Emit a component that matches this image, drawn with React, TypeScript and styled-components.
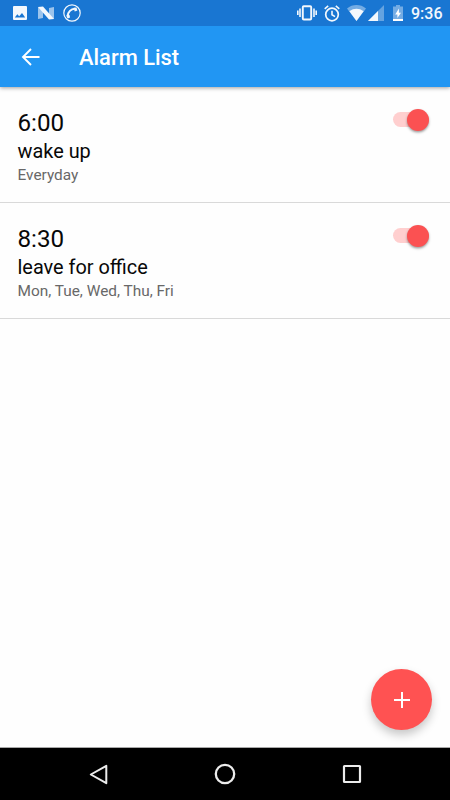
import React from "react";
import styled, { createGlobalStyle } from "styled-components";

const GlobalStyle = createGlobalStyle`
  * { box-sizing: border-box; }
  body { margin: 0; background: #fefefe; font-family: Roboto, "Liberation Sans", sans-serif; }
`;

const Screen = styled.div`
  display: flex;
  flex-direction: column;
  width: 450px;
  height: 800px;
  overflow: hidden;
  background: #fefefe;
`;

const StatusBar = styled.div`
  display: flex;
  align-items: center;
  flex: 0 0 26px;
  padding: 0 8px 0 13px;
  background: #1976d2;
  color: #f3f8fd;
  z-index: 2;
`;

const Glyph = styled.svg<{ $gap?: number }>`
  display: block;
  flex: none;
  margin-right: ${(p) => p.$gap ?? 0}px;
`;

const Spacer = styled.div`
  flex: 1;
`;

const Clock = styled.span`
  width: 31px;
  font-size: 16px;
  line-height: 20px;
  font-weight: 500;
  white-space: nowrap;
  margin-top: 2px;
`;

const AppBar = styled.header`
  display: flex;
  align-items: center;
  flex: 0 0 61px;
  padding: 0 21px;
  gap: 39px;
  background: #2196f3;
  color: #fff;
  box-shadow: 0 1px 4px rgba(0, 0, 0, 0.38);
  z-index: 1;
`;

const IconButton = styled.button`
  display: flex;
  padding: 0;
  border: 0;
  background: none;
  color: inherit;
`;

const Title = styled.h1`
  margin: 2px 0 0;
  font-size: 21.9px;
  line-height: 28px;
  font-weight: 500;
`;

const List = styled.main`
  position: relative;
  flex: 1;
`;

const Row = styled.section`
  display: flex;
  justify-content: space-between;
  align-items: flex-start;
  height: 116px;
  padding: 20px 21.5px 0 17.5px;
  border-bottom: 1px solid #d9d9d9;
`;

const Time = styled.div`
  padding-top: 1px;
  font-size: 24.2px;
  line-height: 30px;
  color: #080808;
`;

const Label = styled.div`
  font-size: 19.9px;
  line-height: 28px;
  color: #080808;
`;

const Days = styled.div`
  font-size: 15.4px;
  line-height: 19px;
  color: #686868;
`;

const Track = styled.div`
  display: flex;
  align-items: center;
  justify-content: flex-end;
  width: 36px;
  height: 15px;
  margin-top: 5px;
  border-radius: 8px;
  background: #ffcfcf;
`;

const Thumb = styled.div`
  flex: none;
  width: 22px;
  height: 22px;
  border-radius: 50%;
  background: #fb5152;
  box-shadow: 0 1.5px 2.5px rgba(0, 0, 0, 0.38);
`;

const AddButton = styled.button`
  position: absolute;
  right: 18px;
  bottom: 17px;
  display: flex;
  align-items: center;
  justify-content: center;
  width: 61px;
  height: 61px;
  padding: 0;
  border: 0;
  border-radius: 50%;
  color: #fff;
  background: #ff5252;
  box-shadow: 0 5px 10px rgba(0, 0, 0, 0.22);
`;

const NavBar = styled.nav`
  display: flex;
  align-items: center;
  justify-content: space-between;
  flex: 0 0 53px;
  padding: 0 88px 0 89px;
  border-top: 1px solid #a8a8a8;
  background: #000;
  color: #ececec;
`;

const alarms = [
  { time: "6:00", label: "wake up", days: "Everyday" },
  { time: "8:30", label: "leave for office", days: "Mon, Tue, Wed, Thu, Fri" },
];

export default function App() {
  return (
    <>
      <GlobalStyle />
      <Screen>
        <StatusBar>
          <Glyph width="14" height="14" viewBox="0 0 14 14" $gap={11}>
            <path fill="currentColor" fillRule="evenodd" d="M1 0h12Q14 0 14 1v12q0 1-1 1H1Q0 14 0 13V1Q0 0 1 0ZM1.800 11.500h10.400L9 7 6.200 10.200 4.300 8.200Z" />
          </Glyph>
          <Glyph width="16" height="14" viewBox="0 0 16 14" $gap={9}>
            <path fill="currentColor" opacity=".6" d="M0 1v12l5-1V3ZM11 2l5-1v12l-5-1Z" />
            <path fill="currentColor" d="M0 1 5 .500 16 13l-5 .500Z" />
          </Glyph>
          <Glyph width="18" height="18" viewBox="0 0 18 18">
            <circle cx="9" cy="9" r="8.200" fill="none" stroke="currentColor" strokeWidth="1.200" />
            <path d="M11.700 4.800C8 4.900 4.900 8 4.800 11.700" fill="none" stroke="currentColor" strokeWidth="2" />
            <path fill="currentColor" d="m10.700 3.700 2.800-.200.900 2.900-2.700 1ZM3.500 10.700l3 .200.600 2.500-2.300 1c-1-.900-1.400-2.100-1.300-3.700Z" />
          </Glyph>
          <Spacer />
          <Glyph width="20" height="16" viewBox="0 0 20 16" $gap={7}>
            <rect x="5.800" y="1.300" width="8.400" height="13.200" rx="1" fill="none" stroke="currentColor" strokeWidth="1.900" />
            <path d="M3 3.500v8.500M.8 5.500v4.500M17 3.500v8.500M19.200 5.500v4.500" stroke="currentColor" strokeWidth="1.600" />
          </Glyph>
          <Glyph width="16" height="17" viewBox="0 0 16 17" $gap={7}>
            <circle cx="8" cy="9.500" r="6.300" fill="none" stroke="currentColor" strokeWidth="1.700" />
            <path d="M.7 3.800 4.200.900M15.300 3.800 11.800.900M8 5.800v4l3 1.800" fill="none" stroke="currentColor" strokeWidth="1.600" />
          </Glyph>
          <Glyph width="19" height="16" viewBox="0 0 19 16" $gap={2}>
            <path fill="currentColor" opacity=".42" d="M0 3.400C5.500-1.100 13.500-1.100 19 3.400L9.500 16Z" />
            <path fill="currentColor" d="M2.400 6.300c4.400-3.300 9.800-3.300 14.200 0L9.500 16Z" />
          </Glyph>
          <Glyph width="16" height="16" viewBox="0 0 16 16" $gap={9}>
            <path fill="currentColor" opacity=".35" d="M16 0v16H0Z" />
            <path fill="currentColor" d="M10 6v10H0Z" />
          </Glyph>
          <Glyph width="10" height="16" viewBox="0 0 10 16" $gap={8}>
            <path fill="currentColor" opacity=".42" d="M3 0h4v1.500h3V16H0V1.500h3Z" />
            <path fill="#fff" d="M5.900 3.500 2.200 9.500h2.200V13L8 7.700H5.900ZM0 14h10V16H0Z" />
          </Glyph>
          <Clock>9:36</Clock>
        </StatusBar>
        <AppBar>
          <IconButton aria-label="Back">
            <Glyph width="19" height="18" viewBox="0 0 19 18">
              <path d="M18.500 9H2M10 1 2 9l8 8" fill="none" stroke="currentColor" strokeWidth="1.900" />
            </Glyph>
          </IconButton>
          <Title>Alarm List</Title>
        </AppBar>
        <List>
          {alarms.map((alarm) => (
            <Row key={alarm.time}>
              <div>
                <Time>{alarm.time}</Time>
                <Label>{alarm.label}</Label>
                <Days>{alarm.days}</Days>
              </div>
              <Track role="switch" aria-checked="true">
                <Thumb />
              </Track>
            </Row>
          ))}
          <AddButton aria-label="Add alarm">
            <Glyph width="16" height="16" viewBox="0 0 16 16">
              <path d="M8 0v16M0 8h16" stroke="currentColor" strokeWidth="2" />
            </Glyph>
          </AddButton>
        </List>
        <NavBar>
          <Glyph width="19" height="21" viewBox="0 0 19 21">
            <path d="M17.300 1.800v17.400L1.800 10.500Z" fill="none" stroke="currentColor" strokeWidth="2" strokeLinejoin="round" />
          </Glyph>
          <Glyph width="22" height="22" viewBox="0 0 22 22">
            <circle cx="11" cy="11" r="9.200" fill="none" stroke="currentColor" strokeWidth="2.300" />
          </Glyph>
          <Glyph width="20" height="20" viewBox="0 0 20 20">
            <rect x="2" y="2" width="16" height="16" rx=".5" fill="none" stroke="currentColor" strokeWidth="2.200" />
          </Glyph>
        </NavBar>
      </Screen>
    </>
  );
}
